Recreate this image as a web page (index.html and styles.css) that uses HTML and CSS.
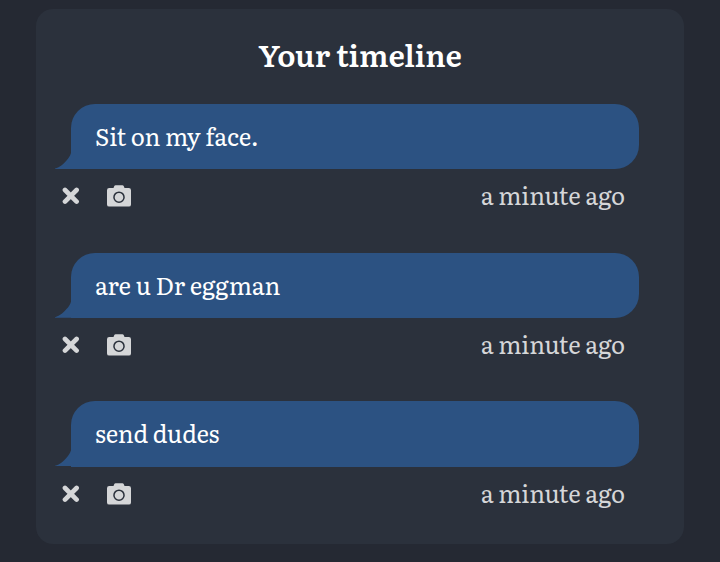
FILE: index.html
```html
<!DOCTYPE html>
<html lang="en">
    <head>
        <meta charset="utf-8" />
        <meta name="viewport" content="width=device-width, initial-scale=1" />
        <title>Your timeline</title>
        <link rel="stylesheet" href="styles.css">
    </head>
    <body>
        <!-- icons shared by every message -->
        <svg class="sprite" xmlns="http://www.w3.org/2000/svg">
            <symbol id="times" viewBox="0 0 18 18">
                <path d="M3 3L14.6 14.6M14.6 3L3 14.6" fill="none" stroke="currentColor" stroke-width="4.7" stroke-linecap="round"/>
            </symbol>
            <symbol id="camera" viewBox="0 0 24 22">
                <path fill="currentColor" fill-rule="evenodd" d="M2.2 3H6.5L7.2 1.2Q7.6 .3 8.6 .3H15.4Q16.4 .3 16.8 1.2L17.5 3H21.8Q24 3 24 5.2V19.4Q24 21.6 21.8 21.6H2.2Q0 21.6 0 19.4V5.2Q0 3 2.2 3ZM12 6.4A5.8 5.8 0 1 0 12 18A5.8 5.8 0 1 0 12 6.4ZM12 7.9A4.3 4.3 0 1 1 12 16.5A4.3 4.3 0 1 1 12 7.9Z"/>
            </symbol>
        </svg>
        <main class="card">
            <h1 class="title">Your timeline</h1>
            <article class="post">
                <p class="bubble">Sit on my face.</p>
                <div class="meta">
                    <svg class="icon-times"><use href="#times"/></svg>
                    <svg class="icon-camera"><use href="#camera"/></svg>
                    <span class="time">a minute ago</span>
                </div>
            </article>
            <article class="post">
                <p class="bubble">are u Dr eggman</p>
                <div class="meta">
                    <svg class="icon-times"><use href="#times"/></svg>
                    <svg class="icon-camera"><use href="#camera"/></svg>
                    <span class="time">a minute ago</span>
                </div>
            </article>
            <article class="post">
                <p class="bubble">send dudes</p>
                <div class="meta">
                    <svg class="icon-times"><use href="#times"/></svg>
                    <svg class="icon-camera"><use href="#camera"/></svg>
                    <span class="time">a minute ago</span>
                </div>
            </article>
        </main>
    </body>
</html>
```

FILE: styles.css
```css
* { margin: 0; padding: 0; box-sizing: border-box; }

body {
    padding: 9px 36px 18px;
    background-color: #252933;
    color: #fff;
    font-family: Literata, "Liberation Serif", serif;
    font-size: 24px;
    letter-spacing: -.1px;
}

.sprite { display: none; }

.card {
    height: 535px;
    padding: 25px 45px 0 35px;
    border-radius: 17px;
    background-color: #2b313c;
}

.title {
    height: 70px;
    margin-right: -10px;
    font-size: 30px;
    font-weight: 600;
    line-height: 41px;
    text-align: center;
}

.post { height: 148.67px; }

.bubble {
    position: relative;
    height: 65.3px;
    padding-left: 24px;
    border-radius: 24px 24px 24px 0;
    background-color: #2c5282;
    line-height: 63px;
}

/* little tail on the bottom left */
.bubble::before {
    content: "";
    position: absolute;
    left: -17px;
    top: 48px;
    width: 18px;
    height: 17px;
    background-color: #2c5282;
    clip-path: path("M18 0H17V1C16 4 14.5 6.5 12.7 8.2C10 11.5 6 15.5 1 16.5V17H18Z");
}

.meta {
    display: flex;
    align-items: center;
    height: 54px;
    margin-left: -9px;
    padding-right: 14px;
    color: #d5d6d8;
}

.icon-times { width: 18px; height: 18px; }
.icon-camera { width: 24px; height: 22px; margin-left: 27px; }

.time { margin-left: auto; padding-bottom: 2px; line-height: 36px; }
```
